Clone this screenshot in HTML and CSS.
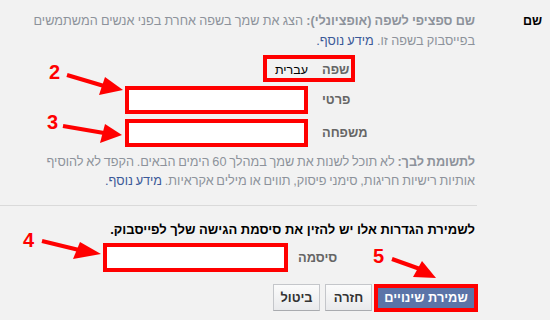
FILE: index.html
```html
<!DOCTYPE html>
<html lang="he" dir="rtl">
<head>
<meta charset="utf-8">
<link rel="stylesheet" href="styles.css">
</head>
<body>
<div class="layout">
  <div class="head">שם</div>
  <div class="content">
    <p class="desc"><b>שם ספציפי לשפה (אופציונלי):</b> הצג את שמך בשפה אחרת בפני אנשים המשתמשים<br>בפייסבוק בשפה זו. <a href="#">מידע נוסף.</a></p>
    <div class="row lang-row">
      <div class="lbl">שפה</div>
      <div class="val">עברית</div>
    </div>
    <div class="row field-row">
      <div class="lbl">פרטי</div>
      <div class="field"></div>
    </div>
    <div class="row field-row second">
      <div class="lbl">משפחה</div>
      <div class="field"></div>
    </div>
    <p class="note"><b>לתשומת לבך:</b> לא תוכל לשנות את שמך במהלך 60 הימים הבאים. הקפד לא להוסיף<br>אותיות רישיות חריגות, סימני פיסוק, תווים או מילים אקראיות. <a href="#">מידע נוסף.</a></p>
    <div class="confirm">
      <p class="confirm-text">לשמירת הגדרות אלו יש להזין את סיסמת הגישה שלך לפייסבוק.</p>
      <div class="row pw-row">
        <div class="lbl pw-lbl">סיסמה</div>
        <div class="field pw-field"></div>
      </div>
      <div class="buttons">
        <span class="btn primary">שמירת שינויים</span>
        <span class="btn">חזרה</span>
        <span class="btn">ביטול</span>
      </div>
    </div>
  </div>
</div>
<svg class="annot" width="550" height="320" viewBox="0 0 550 320">
  <rect x="265" y="57" width="88" height="23" fill="none" stroke="#f00" stroke-width="4"/>
  <text x="49" y="79">2</text>
  <line x1="67" y1="75" x2="104" y2="86" stroke="#f00" stroke-width="4"/>
  <polygon points="105,77 123,90 99,95" fill="#f00"/>
  <text x="47" y="129">3</text>
  <line x1="63" y1="126" x2="104" y2="133" stroke="#f00" stroke-width="4"/>
  <polygon points="105,124 122,135 100,143" fill="#f00"/>
  <text x="23" y="247">4</text>
  <line x1="42" y1="241" x2="79" y2="250" stroke="#f00" stroke-width="4"/>
  <polygon points="80,242 101,254 73,259" fill="#f00"/>
  <text x="373" y="263">5</text>
  <line x1="392" y1="259" x2="420" y2="269" stroke="#f00" stroke-width="4"/>
  <polygon points="422,261 436,278 413,277" fill="#f00"/>
</svg>
</body>
</html>
```
FILE: styles.css
```css
html, body {
  margin: 0;
  padding: 0;
}
body {
  width: 550px;
  height: 320px;
  overflow: hidden;
  position: relative;
  background: #f2f2f2;
  direction: rtl;
  font-family: "Liberation Sans", Arial, "DejaVu Sans", sans-serif;
  font-size: 12px;
  line-height: 20px;
  color: #000;
}
.layout {
  display: flex;
}
.head {
  width: 65px;
  padding-right: 8px;
  padding-top: 11px;
  font-weight: bold;
  font-size: 12.5px;
  flex: none;
}
.content {
  flex: 1;
}
.desc {
  margin: 0;
  padding: 11px 2px 0 0;
  color: #8d929b;
  font-size: 12.7px;
  word-spacing: -0.3px;
  white-space: nowrap;
}
.desc a, .note a {
  color: #3b5998;
  text-decoration: none;
}
.row {
  display: flex;
  align-items: center;
}
.lbl {
  width: 155px;
  padding-left: 14px;
  text-align: left;
  color: #666;
  font-weight: bold;
  font-size: 12.8px;
  flex: none;
}
.lang-row {
  margin-top: 9px;
}
.val {
  color: #000;
  font-size: 12.5px;
}
.field-row {
  margin-top: 6px;
}
.field-row.second {
  margin-top: 5px;
}
.field {
  box-sizing: border-box;
  width: 183px;
  height: 28px;
  background: #fff;
  border: 4px solid #f00;
}
.note {
  margin: 6px 0 0 0;
  padding-right: 2px;
  line-height: 19px;
  color: #8d929b;
  font-size: 12.7px;
  word-spacing: -0.8px;
  white-space: nowrap;
}
.confirm {
  margin-top: 14px;
  border-top: 1px solid #dadada;
}
.confirm-text {
  margin: 0;
  padding: 14px 2px 0 0;
  font-weight: bold;
  font-size: 13px;
  color: #000;
}
.pw-row {
  margin-top: 3px;
}
.pw-lbl {
  width: 179px;
  padding-left: 10px;
}
.pw-field {
  width: 185px;
  height: 29px;
}
.buttons {
  display: flex;
  margin-top: 12px;
  margin-right: -1px;
}
.btn {
  box-sizing: border-box;
  width: 47px;
  height: 27px;
  display: flex;
  align-items: center;
  justify-content: center;
  border: 1px solid #c4c6ca;
  border-bottom-color: #a9abaf;
  background: linear-gradient(#fbfbfb, #e9eaec);
  color: #333;
  font-weight: bold;
  font-size: 12.8px;
  margin-left: 5px;
}
.btn.primary {
  width: 104px;
  height: 28px;
  border: 4px solid #f00;
  background: #5b74a8;
  color: #fff;
  margin-left: 2px;
}
.annot {
  position: absolute;
  left: 0;
  top: 0;
  direction: ltr;
  pointer-events: none;
  font-family: "Liberation Sans", Arial, sans-serif;
  font-weight: bold;
  font-size: 20px;
  fill: #f00;
}
```
